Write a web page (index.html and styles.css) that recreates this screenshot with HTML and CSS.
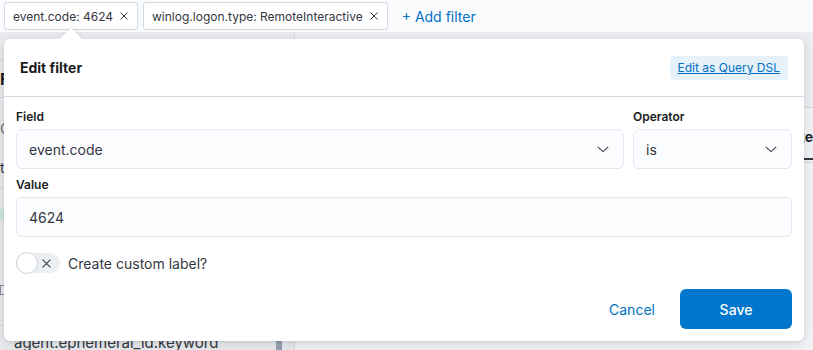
FILE: index.html
```html
<!DOCTYPE html>
<html lang="en">
<head>
  <meta charset="UTF-8">
  <title>Edit filter</title>
  <link rel="stylesheet" href="styles.css">
</head>
<body>

  <div class="filter-bar">
    <div class="pill">event.code: 4624
      <svg class="pill-x" width="8" height="8" viewBox="0 0 8 8"><path d="M0.5 0.5l7 7M7.5 0.5l-7 7" stroke="#343741" stroke-width="1"/></svg>
    </div>
    <div class="pill">winlog.logon.type: RemoteInteractive
      <svg class="pill-x" width="8" height="8" viewBox="0 0 8 8"><path d="M0.5 0.5l7 7M7.5 0.5l-7 7" stroke="#343741" stroke-width="1"/></svg>
    </div>
    <a class="add-filter" href="#">+ Add filter</a>
  </div>

  <div class="app">
    <div class="sidebar">
      <div class="side-title">Fi</div>
      <div class="side-search">Q</div>
      <div class="side-type">t</div>
      <div class="side-badge"></div>
      <div class="side-icon"></div>
      <div class="side-field">agent.ephemeral_id.keyword</div>
      <div class="scrollbar"></div>
    </div>
    <div class="main">
      <div class="main-top"></div>
      <div class="tabs"><span class="tab">ke</span></div>
    </div>
  </div>

  <div class="popover">
    <div class="arrow"></div>
    <div class="pop-header">
      <span class="pop-title">Edit filter</span>
      <a class="dsl-btn" href="#">Edit as Query DSL</a>
    </div>

    <div class="pop-body">
      <div class="row">
        <div class="form-group grow">
          <label class="lbl">Field</label>
          <div class="select">event.code
            <svg class="chev" width="14" height="14" viewBox="0 0 16 16"><path d="M2 5.5l6 5.5 6-5.5" fill="none" stroke="#343741" stroke-width="1.2"/></svg>
          </div>
        </div>
        <div class="form-group op">
          <label class="lbl">Operator</label>
          <div class="select">is
            <svg class="chev" width="14" height="14" viewBox="0 0 16 16"><path d="M2 5.5l6 5.5 6-5.5" fill="none" stroke="#343741" stroke-width="1.2"/></svg>
          </div>
        </div>
      </div>

      <div class="form-group value">
        <label class="lbl">Value</label>
        <div class="select">4624</div>
      </div>

      <div class="switch-row">
        <span class="switch">
          <span class="knob"></span>
          <svg class="switch-x" width="9" height="9" viewBox="0 0 8 8"><path d="M0.5 0.5l7 7M7.5 0.5l-7 7" stroke="#343741" stroke-width="0.9"/></svg>
        </span>
        <span class="switch-label">Create custom label?</span>
      </div>
    </div>

    <div class="pop-footer">
      <a class="cancel" href="#">Cancel</a>
      <button class="save">Save</button>
    </div>
  </div>

</body>
</html>
```

FILE: styles.css
```css
body {
  margin: 0;
  font-family: Inter, "Noto Sans", sans-serif;
  background: #eceef2;
  color: #343741;
  width: 813px;
  height: 350px;
  overflow: hidden;
  position: relative;
}

.filter-bar {
  display: flex;
  align-items: center;
  gap: 5px;
  height: 32px;
  padding-left: 4px;
  background: #fafbfc;
}

.pill {
  display: flex;
  align-items: center;
  height: 26px;
  padding: 0 9px 0 8px;
  border: 1px solid #d3dae6;
  border-radius: 3px;
  background: #fff;
  font-size: 12px;
  color: #343741;
  white-space: nowrap;
}

.pill-x {
  margin-left: 7px;
}

.add-filter {
  margin-left: 9px;
  font-size: 14px;
  color: #0071c2;
  text-decoration: none;
}

.app {
  display: flex;
  height: 318px;
}

.sidebar {
  position: relative;
  width: 300px;
  background: #e9ebef;
  border-right: 1px solid #d8dce3;
}

.side-title {
  margin-top: 28px;
  padding: 8px 0;
  font-weight: bold;
  font-size: 16px;
  color: #1a1c21;
  border-top: 1px solid #d5d9e0;
  border-bottom: 1px solid #d5d9e0;
}

.side-search {
  margin-top: 22px;
  font-size: 14px;
  color: #69707d;
}

.side-type {
  margin-top: 22px;
  padding-bottom: 12px;
  font-size: 14px;
  color: #343741;
  border-bottom: 1px solid #d5d9e0;
}

.side-badge {
  margin-top: 20px;
  width: 4px;
  height: 12px;
  background: #cde8d9;
}

.side-icon {
  margin-top: 64px;
  width: 3px;
  height: 8px;
  border: 1px solid #8a8f99;
}

.side-field {
  margin-top: 30px;
  padding-top: 7px;
  padding-left: 14px;
  font-size: 15px;
  color: #343741;
  border-top: 1px solid #d5d9e0;
}

.scrollbar {
  position: absolute;
  left: 276px;
  bottom: 0;
  width: 6px;
  height: 10px;
  background: #98a2b3;
}

.main {
  flex: 1;
  background: #f3f4f7;
}

.main-top {
  height: 75px;
  background: #eceef1;
  border-bottom: 1px solid #d3dae6;
}

.tabs {
  height: 37px;
  margin-top: 17px;
  padding-left: 502px;
  border-bottom: 1px solid #d3dae6;
}

.tab {
  display: inline-block;
  padding-top: 3px;
  height: 30px;
  font-size: 14px;
  font-weight: bold;
  color: #1a1c21;
  border-bottom: 2px solid #343741;
}

/* popover */
.popover {
  position: absolute;
  left: 4px;
  top: 39px;
  width: 800px;
  height: 302px;
  background: #fff;
  border-radius: 6px;
  box-shadow: 0 3px 14px rgba(0,0,0,0.12), 0 1px 3px rgba(0,0,0,0.08);
  display: flex;
  flex-direction: column;
}

.arrow {
  position: absolute;
  left: 59px;
  top: -8px;
  width: 16px;
  height: 16px;
  background: #fff;
  transform: rotate(45deg);
  box-shadow: -2px -2px 4px rgba(0,0,0,0.06);
}

.pop-header {
  position: relative;
  display: flex;
  align-items: center;
  justify-content: space-between;
  height: 57px;
  padding: 0 16px;
  border-bottom: 1px solid #d3dae6;
  background: #fff;
  border-radius: 6px 6px 0 0;
}

.pop-title {
  font-size: 14px;
  font-weight: 700;
  color: #1a1c21;
}

.dsl-btn {
  display: inline-flex;
  align-items: center;
  height: 24px;
  padding: 0 8px;
  border-radius: 4px;
  background: #e6f1fa;
  color: #0071c2;
  font-size: 12px;
  text-decoration: underline;
}

.pop-body {
  padding: 12px 12px 0;
}

.row {
  display: flex;
  gap: 9px;
}

.grow {
  flex: 1;
}

.op {
  width: 159px;
}

.lbl {
  display: block;
  font-size: 12px;
  font-weight: 600;
  line-height: 16px;
  color: #1a1c21;
  margin-bottom: 4px;
}

.value {
  margin-top: 8px;
}

.select {
  position: relative;
  display: flex;
  align-items: center;
  height: 38px;
  padding: 0 12px;
  border: 1px solid #e3e7ef;
  border-radius: 6px;
  background: #fbfcfd;
  font-size: 14px;
  color: #343741;
}

.chev {
  position: absolute;
  right: 13px;
  top: 12px;
}

.switch-row {
  display: flex;
  align-items: center;
  gap: 8px;
  margin-top: 16px;
}

.switch {
  position: relative;
  display: inline-flex;
  align-items: center;
  justify-content: flex-end;
  width: 44px;
  height: 20px;
  border-radius: 10px;
  background: #eceff4;
  padding-right: 9px;
  box-sizing: border-box;
}

.knob {
  position: absolute;
  left: 0;
  top: -1px;
  width: 20px;
  height: 20px;
  border: 1px solid #ccd3dd;
  border-radius: 50%;
  background: #fff;
}

.switch-label {
  font-size: 14px;
  color: #343741;
}

.pop-footer {
  margin-top: auto;
  display: flex;
  align-items: center;
  justify-content: flex-end;
  gap: 8px;
  padding: 0 12px 12px;
}

.cancel {
  display: inline-flex;
  align-items: center;
  justify-content: center;
  width: 80px;
  height: 40px;
  font-size: 14px;
  color: #0071c2;
  text-decoration: none;
}

.save {
  width: 112px;
  height: 40px;
  border: none;
  border-radius: 6px;
  background: #0077cc;
  color: #fff;
  font-family: Inter, "Noto Sans", sans-serif;
  font-size: 14px;
  font-weight: 500;
}
```
